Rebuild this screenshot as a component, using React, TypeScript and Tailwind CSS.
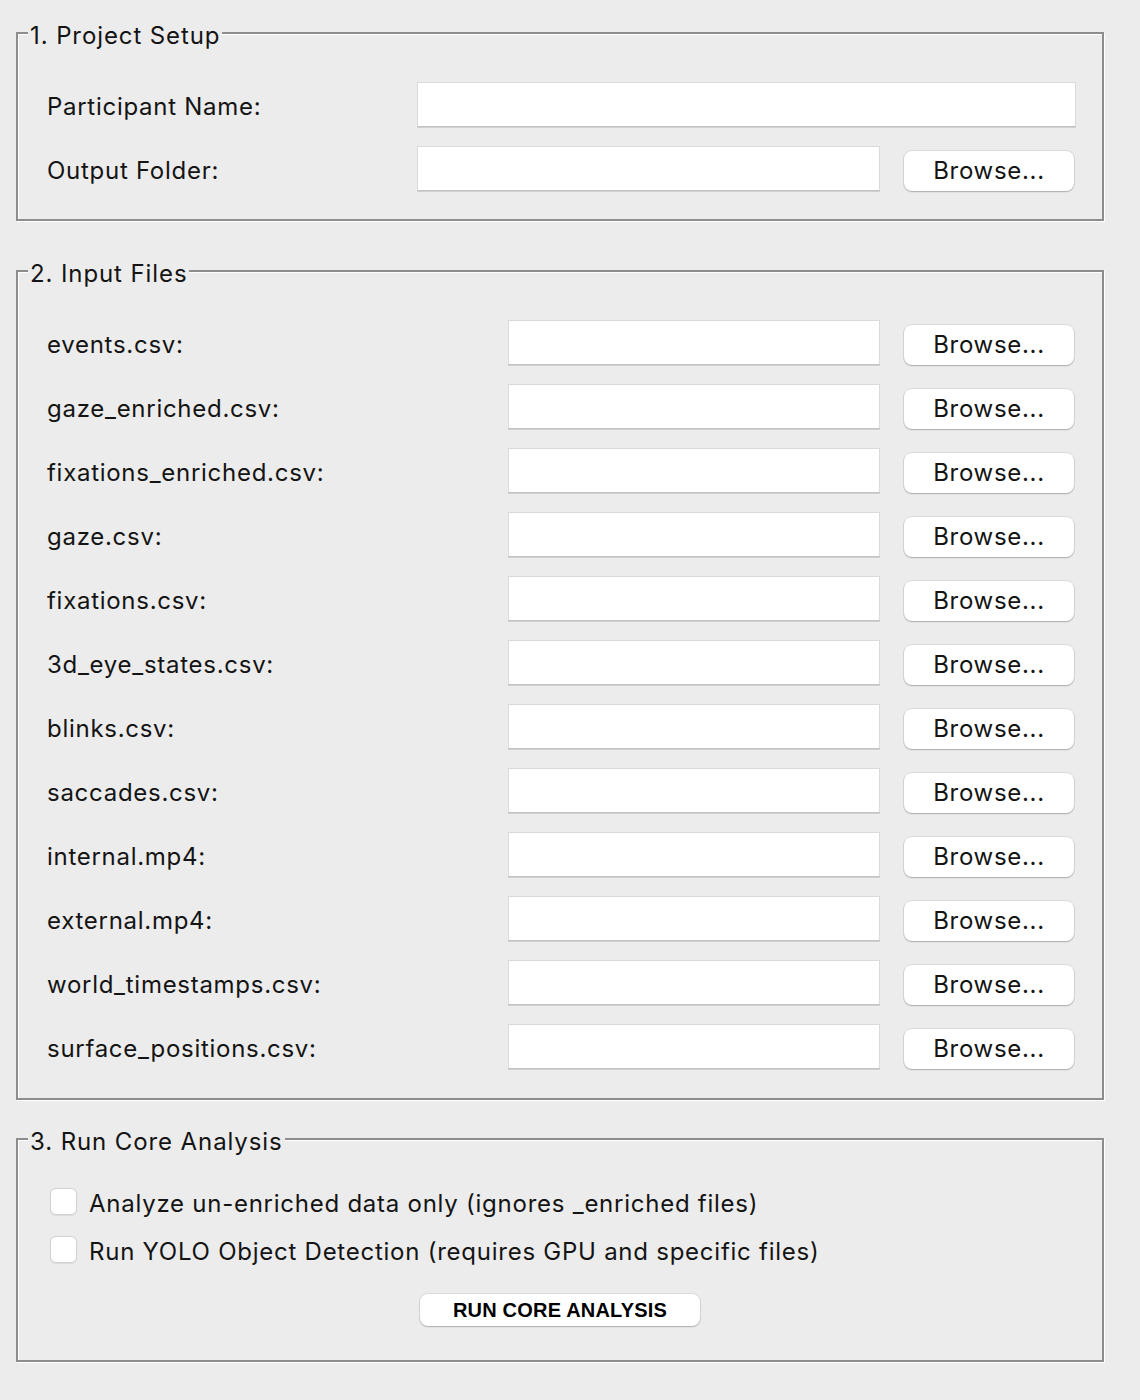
import React from 'react';

const font = { fontFamily: 'Inter, "Noto Sans", sans-serif' };

const inputFiles = [
  'events.csv:',
  'gaze_enriched.csv:',
  'fixations_enriched.csv:',
  'gaze.csv:',
  'fixations.csv:',
  '3d_eye_states.csv:',
  'blinks.csv:',
  'saccades.csv:',
  'internal.mp4:',
  'external.mp4:',
  'world_timestamps.csv:',
  'surface_positions.csv:',
];

function Group({ title, className, children }: { title: string; className?: string; children: React.ReactNode }) {
  return (
    <div
      className={`relative w-[1088px] border-2 border-[#8d8d8d] shadow-[inset_1px_1px_0_#ffffff,1px_1px_0_#ffffff] ${className ?? ''}`}
    >
      <span className="absolute left-[10px] top-[-12px] bg-[#ececec] px-[2px] text-[24px] leading-[28px] tracking-[0.9px] text-[#141414]">
        {title}
      </span>
      {children}
    </div>
  );
}

function TextInput({ width }: { width: string }) {
  return (
    <div
      className={`${width} h-[45px] mb-[6px] bg-white border border-[#dadada] border-b-[#c2c2c2] shadow-[0_1px_0_#d0d0d0]`}
    />
  );
}

function BrowseButton() {
  return (
    <button className="w-[170px] h-[40px] rounded-[8px] bg-white text-[24px] leading-none tracking-[0.7px] text-[#141414] shadow-[0_0_0_1px_rgba(0,0,0,0.07),0_1px_1.5px_rgba(0,0,0,0.22)]">
      Browse...
    </button>
  );
}

function Checkbox({ label }: { label: string }) {
  return (
    <label className="flex items-center h-[48px]">
      <span className="w-[27px] h-[27px] mb-[5px] rounded-[6px] bg-white border border-[#d2d2d2] shadow-[0_0.5px_1px_rgba(0,0,0,0.08)]" />
      <span className="ml-[12px] text-[24px] leading-[28px] tracking-[0.75px] text-[#141414]">{label}</span>
    </label>
  );
}

export default function App() {
  return (
    <div className="w-[1140px] h-[1400px] bg-[#ececec] pl-[16px] pt-[32px]" style={font}>
      <Group title="1. Project Setup" className="pt-[41px] pb-[16px] pl-[29px]">
        <div className="flex items-center h-[64px]">
          <span className="w-[370px] text-[24px] tracking-[0.72px] text-[#141414]">Participant Name:</span>
          <TextInput width="w-[659px]" />
        </div>
        <div className="flex items-center h-[64px]">
          <span className="w-[370px] text-[24px] tracking-[0.72px] text-[#141414]">Output Folder:</span>
          <TextInput width="w-[463px]" />
          <div className="ml-[24px]">
            <BrowseButton />
          </div>
        </div>
      </Group>

      <Group title="2. Input Files" className="mt-[49px] pt-[41px] pb-[17px] pl-[29px]">
        {inputFiles.map((f) => (
          <div key={f} className="flex items-center h-[64px]">
            <span className="w-[461px] text-[24px] tracking-[0.72px] text-[#141414]">{f}</span>
            <TextInput width="w-[372px]" />
            <div className="ml-[24px]">
              <BrowseButton />
            </div>
          </div>
        ))}
      </Group>

      <Group title="3. Run Core Analysis" className="mt-[38px] pt-[40px] pb-[34px] pl-[32px]">
        <Checkbox label="Analyze un-enriched data only (ignores _enriched files)" />
        <Checkbox label="Run YOLO Object Detection (requires GPU and specific files)" />
        <div className="flex justify-center mt-[18px] pr-[32px]">
          <button
            className="w-[280px] h-[32px] rounded-[8px] bg-white text-[20px] font-bold leading-none tracking-[0.2px] text-black shadow-[0_0_0_1px_rgba(0,0,0,0.07),0_1px_1.5px_rgba(0,0,0,0.22)]"
            style={{ fontFamily: '"Liberation Sans", Arial, sans-serif' }}
          >
            RUN CORE ANALYSIS
          </button>
        </div>
      </Group>
    </div>
  );
}
